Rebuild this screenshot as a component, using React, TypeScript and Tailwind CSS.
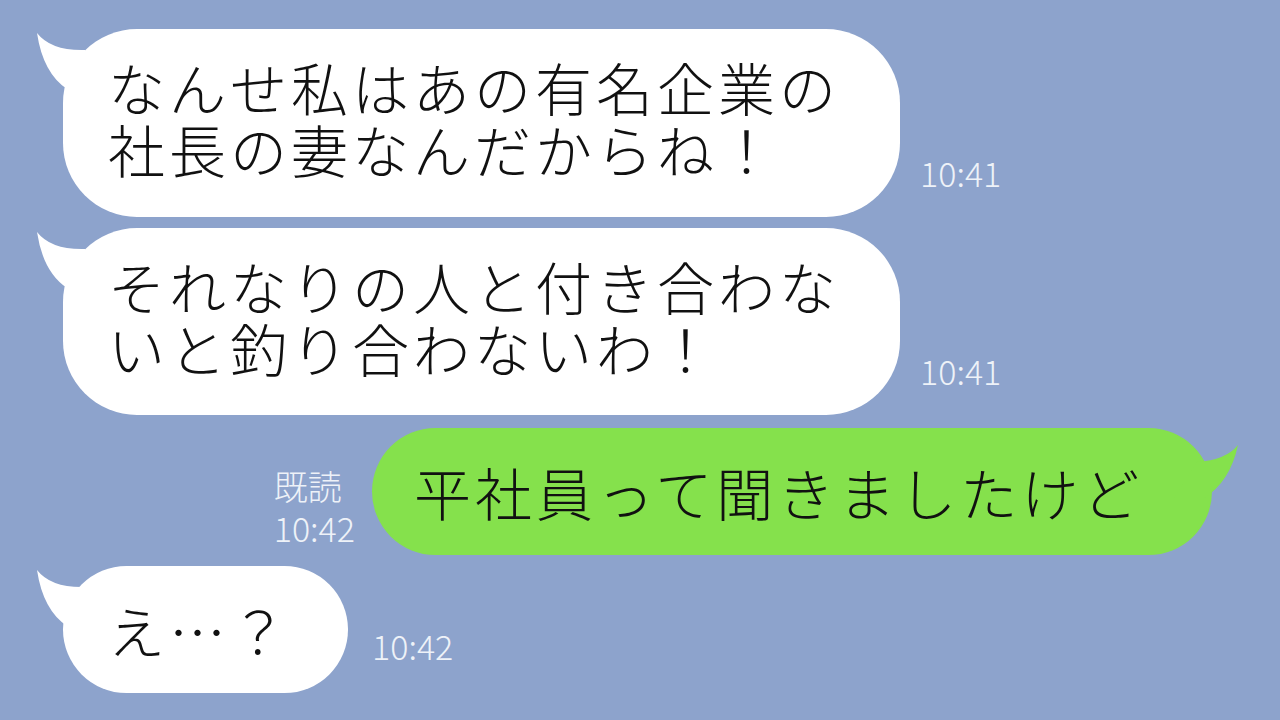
const jp = 'font-["Noto_Sans_CJK_JP","Noto_Sans",sans-serif]';

function LeftTail() {
  return (
    <svg className="absolute -left-[30px] top-0" width="80" height="64" viewBox="0 0 80 64">
      <path d="M4 4 Q 18 22 52 21 L 70 60 L 34 60 Q 10 44 4 4 Z" fill="#ffffff" />
    </svg>
  );
}

function RightTail() {
  return (
    <svg className="absolute -right-[32px] top-[10px]" width="80" height="64" viewBox="0 0 80 64">
      <path d="M74 7 Q 62 22 33 24 L 10 60 L 40 60 Q 66 44 74 7 Z" fill="#85e14c" />
    </svg>
  );
}

function Time({ children, className = '' }: { children: React.ReactNode; className?: string }) {
  return (
    <div className={`text-[34px] leading-none font-light text-[#eef2f8] ${jp} ${className}`}>{children}</div>
  );
}

export default function App() {
  return (
    <div className={`w-[1280px] h-[720px] overflow-hidden bg-[#8da3cc] pt-[29px] ${jp}`}>
      {/* first message */}
      <div className="flex items-end pl-[63px]">
        <div className="relative w-[837px] h-[188px] rounded-[74px] bg-white flex items-center pl-[45px] pb-[12px]">
          <LeftTail />
          <p className="relative text-[57px] leading-[62px] tracking-[4px] font-light text-[#111]">
            なんせ私はあの有名企業の
            <br />
            社長の妻なんだからね！
          </p>
        </div>
        <Time className="ml-[20px] mb-[27px]">10:41</Time>
      </div>

      {/* second message */}
      <div className="flex items-end pl-[63px] mt-[11px]">
        <div className="relative w-[837px] h-[187px] rounded-[74px] bg-white flex items-center pl-[45px] pb-[12px]">
          <LeftTail />
          <p className="relative text-[57px] leading-[62px] tracking-[4px] font-light text-[#111]">
            それなりの人と付き合わな
            <br />
            いと釣り合わないわ！
          </p>
        </div>
        <Time className="ml-[20px] mb-[27px]">10:41</Time>
      </div>

      {/* my reply */}
      <div className="flex items-end justify-end pr-[68px] mt-[13px]">
        <div className="flex flex-col gap-[8px] mr-[17px] mb-[10px]">
          <Time>既読</Time>
          <Time>10:42</Time>
        </div>
        <div className="relative w-[840px] h-[127px] rounded-[64px] bg-[#85e14c] flex items-center pl-[42px]">
          <RightTail />
          <p className="relative text-[57px] leading-none tracking-[4px] font-light text-[#111]">平社員って聞きましたけど</p>
        </div>
      </div>

      {/* last message */}
      <div className="flex items-end pl-[63px] mt-[11px]">
        <div className="relative w-[285px] h-[127px] rounded-[64px] bg-white flex items-center pl-[45px]">
          <LeftTail />
          <p className="relative text-[57px] leading-none tracking-[4px] font-light text-[#111]">え…？</p>
        </div>
        <Time className="ml-[24px] mb-[30px]">10:42</Time>
      </div>
    </div>
  );
}
